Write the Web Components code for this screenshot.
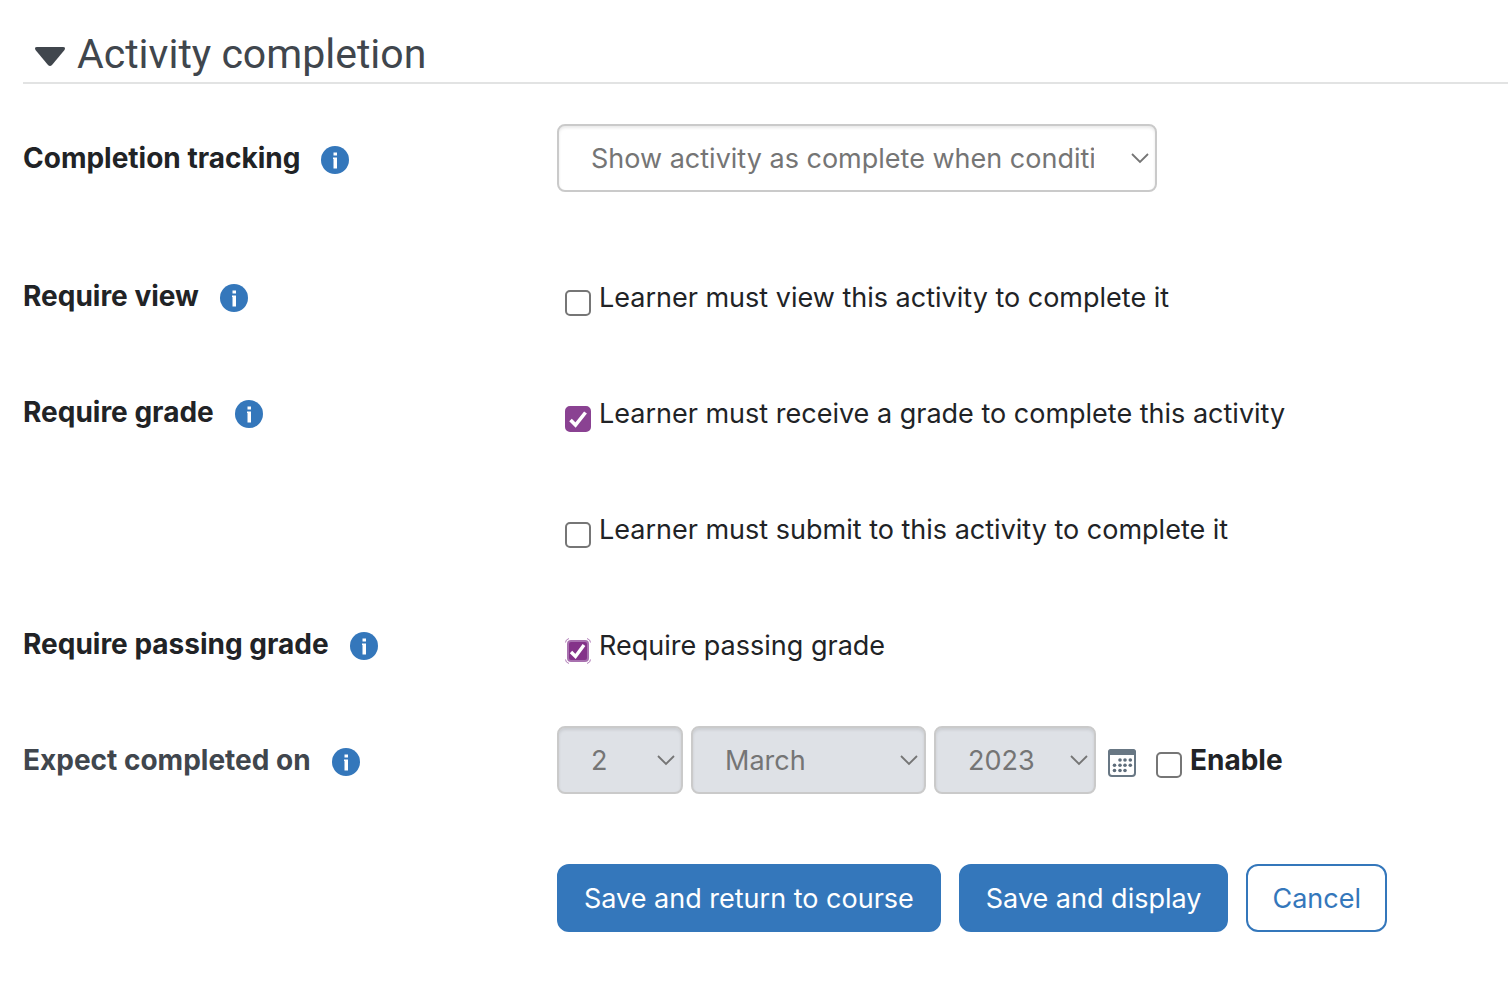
<!DOCTYPE html>
<html lang="en">
<head>
<meta charset="utf-8">
<title>Activity completion</title>
<style>
  body { margin: 0; background: #fff; color: #212326; font: 27px/42px Inter, "Liberation Sans", sans-serif; }
</style>
</head>
<body>
<completion-form></completion-form>

<template id="section-heading">
  <style>
    :host { display: block; border-bottom: 2px solid #e2e3e3; color: #40464d; }
    h2 { margin: 0; font-family: Roboto, Inter, sans-serif; font-weight: 400; font-size: 41px; line-height: 56px; }
    button { all: unset; box-sizing: border-box; display: flex; align-items: center; gap: 11px; padding-left: 11px; cursor: pointer; }
    svg { width: 32px; height: 24px; flex: none; }
  </style>
  <h2><button type="button" aria-expanded="true">
    <svg viewBox="0 0 32 24" aria-hidden="true"><path d="M3 5H29Q32 5 30.500 8L18 23Q16 25 14 23L1.500 8Q0 5 3 5Z" fill="currentColor"/></svg>
    <slot></slot>
  </button></h2>
</template>

<template id="help-button">
  <style>
    :host { display: block; }
    button { all: unset; display: block; width: 28px; height: 28px; cursor: pointer; }
    svg { display: block; }
  </style>
  <button type="button" aria-label="Help">
    <svg width="28" height="28" viewBox="0 0 28 28" aria-hidden="true"><circle cx="14" cy="14" r="14" fill="#3477bb"/><path d="M12.500 6.500h3.500v3h-3.500zM12 11.500H16V22.500H12.500V13H12Z" fill="#fff"/></svg>
  </button>
</template>

<template id="form-row">
  <style>
    :host { display: grid; grid-template-columns: 534px 1fr; align-items: center; min-height: 68px; }
    .name { display: flex; align-items: center; gap: 21px; font-size: 28px; font-weight: 700; }
    help-button { padding-top: 4px; }
    .field { display: flex; align-items: center; }
    :host([muted]) .name { color: #40464d; }
  </style>
  <div class="name"></div>
  <div class="field"><slot></slot></div>
</template>

<template id="check-field">
  <style>
    :host { display: block; padding-left: 8px; }
    label { display: flex; gap: 8px; cursor: pointer; }
    .box { position: relative; width: 26px; height: 26px; margin-top: 13px; flex: none; }
    input { appearance: none; display: block; box-sizing: border-box; width: 26px; height: 26px; margin: 0; border: 2px solid #767676; border-radius: 5px; background: #fff; }
    input:checked { border-color: #8a4292; background: #8a4292; }
    svg { position: absolute; inset: 0; display: none; pointer-events: none; }
    :host([checked]:not([marked])) .tick, :host([marked]) .mark { display: block; }
    :host([marked]) input:checked { border-color: transparent; background: none; }
    :host([strong]) { font-size: 28px; font-weight: 700; }
  </style>
  <label>
    <span class="box">
      <input type="checkbox">
      <svg class="tick" width="26" height="26" viewBox="0 0 26 26"><path d="M5.500 14L10.500 19L20.500 6.500" fill="none" stroke="#fff" stroke-width="3.600"/></svg>
      <svg class="mark" width="26" height="26" viewBox="0 0 26 26">
        <path d="M0.500 4.500Q0.500 1.500 4 0.500M22 0.500Q25.500 1.500 25.500 4.500M0.500 21.500Q0.500 24.500 4 25.500M22 25.500Q25.500 24.500 25.500 21.500" fill="none" stroke="#b27fb8"/>
        <rect x="2" y="2" width="22" height="22" rx="4" fill="#a871af"/>
        <rect x="4" y="4" width="18" height="18" rx="2" fill="#843389"/>
        <path d="M6 14L10.500 18.500L19 7" fill="none" stroke="#fff" stroke-width="3.400"/>
      </svg>
    </span>
    <span><slot></slot></span>
  </label>
</template>

<template id="select-field">
  <style>
    :host { display: block; position: relative; }
    select { appearance: none; display: block; box-sizing: border-box; width: 100%; height: 68px; margin: 0; padding: 2px 61px 0 32px; border: 2px solid #cacaca; border-radius: 8px; background: #fff; color: #757575; font: inherit; opacity: 1; box-shadow: inset 0 2px 3px rgba(0,0,0,.09); }
    select:disabled { padding-right: 40px; background: #dee1e6; }
    svg { position: absolute; right: 7px; top: 28px; pointer-events: none; }
  </style>
  <select><option></option></select>
  <svg width="20" height="13" viewBox="0 0 20 13" aria-hidden="true"><path d="M2 2L10 10L18 2" fill="none" stroke="#757575" stroke-width="1.800"/></svg>
</template>

<template id="calendar-button">
  <style>
    :host { display: block; padding-top: 6px; }
    button { all: unset; display: block; cursor: pointer; }
    svg { display: block; }
  </style>
  <button type="button" aria-label="Calendar">
    <svg width="28" height="28" viewBox="0 0 28 28" aria-hidden="true">
      <rect x="1" y="1" width="26" height="26" rx="3" fill="#fff" stroke="#687784" stroke-width="2"/>
      <path d="M0 6V3Q0 0 3 0H25Q28 0 28 3V6Z" fill="#687784"/>
      <g fill="#5e6d7b"><circle cx="12" cy="11" r="1.800"/><circle cx="17" cy="11" r="1.800"/><circle cx="22.300" cy="11" r="1.800"/><circle cx="6.500" cy="16.300" r="1.800"/><circle cx="12" cy="16.300" r="1.800"/><circle cx="17" cy="16.300" r="1.800"/><circle cx="22.300" cy="16.300" r="1.800"/><circle cx="6.500" cy="21.500" r="1.800"/><circle cx="12" cy="21.500" r="1.800"/><circle cx="17" cy="21.500" r="1.800"/></g>
    </svg>
  </button>
</template>

<template id="action-button">
  <style>
    :host { display: block; }
    button { box-sizing: border-box; height: 68px; margin: 0; padding: 2px 25px 0; border: 2px solid #3477bb; border-radius: 12px; background: #3477bb; color: #fff; font: inherit; white-space: nowrap; cursor: pointer; }
    :host([outline]) button { padding: 2px 24px 0; background: #fff; color: #3477bb; }
  </style>
  <button type="button"><slot></slot></button>
</template>

<template id="completion-form">
  <style>
    :host { display: block; padding: 26px 0 70px 23px; }
    .rows { display: flex; flex-direction: column; padding-top: 40px; }
    .rows > * { margin-bottom: 48px; }
    .rows > .tracking, .rows > .date { margin-bottom: 70px; }
    .rows > .actions { margin-bottom: 0; }
    form-row > check-field { padding-top: 4px; }
    .long { width: 600px; }
    .day { width: 126px; }
    .month { width: 235px; }
    .year { width: 162px; }
    .dates { display: flex; align-items: center; gap: 8px; }
    calendar-button { margin: 0 4px; }
    .buttons { display: flex; gap: 18px; }
  </style>
  <section-heading>Activity completion</section-heading>
  <div class="rows">
    <form-row class="tracking" name="Completion tracking"><select-field class="long" name="Completion tracking" value="Show activity as complete when conditions are met"></select-field></form-row>
    <form-row name="Require view"><check-field>Learner must view this activity to complete it</check-field></form-row>
    <form-row name="Require grade"><check-field checked>Learner must receive a grade to complete this activity</check-field></form-row>
    <form-row><check-field>Learner must submit to this activity to complete it</check-field></form-row>
    <form-row name="Require passing grade"><check-field checked marked>Require passing grade</check-field></form-row>
    <form-row class="date" name="Expect completed on" muted>
      <div class="dates">
        <select-field class="day" name="Day" value="2" disabled></select-field>
        <select-field class="month" name="Month" value="March" disabled></select-field>
        <select-field class="year" name="Year" value="2023" disabled></select-field>
        <calendar-button></calendar-button>
        <check-field strong>Enable</check-field>
      </div>
    </form-row>
    <form-row class="actions">
      <div class="buttons">
        <action-button>Save and return to course</action-button>
        <action-button>Save and display</action-button>
        <action-button outline>Cancel</action-button>
      </div>
    </form-row>
  </div>
</template>

<script>
  class Base extends HTMLElement {
    constructor() {
      super();
      this.attachShadow({ mode: "open" }).append(document.getElementById(this.localName).content.cloneNode(true));
    }
    $(selector) { return this.shadowRoot.querySelector(selector); }
  }
  customElements.define("section-heading", class extends Base {});
  customElements.define("help-button", class extends Base {});
  customElements.define("calendar-button", class extends Base {});
  customElements.define("action-button", class extends Base {});
  customElements.define("form-row", class extends Base {
    connectedCallback() {
      const name = this.getAttribute("name");
      if (!name) return;
      const text = document.createElement("span");
      text.textContent = name;
      this.$(".name").replaceChildren(text, document.createElement("help-button"));
    }
  });
  customElements.define("check-field", class extends Base {
    connectedCallback() {
      const input = this.$("input");
      input.checked = this.hasAttribute("checked");
      input.addEventListener("change", () => {
        this.removeAttribute("marked");
        this.toggleAttribute("checked", input.checked);
      });
    }
  });
  customElements.define("select-field", class extends Base {
    connectedCallback() {
      const select = this.$("select");
      select.setAttribute("aria-label", this.getAttribute("name"));
      select.disabled = this.hasAttribute("disabled");
      select.options[0].textContent = this.getAttribute("value");
    }
  });
  customElements.define("completion-form", class extends Base {});
</script>
</body>
</html>
